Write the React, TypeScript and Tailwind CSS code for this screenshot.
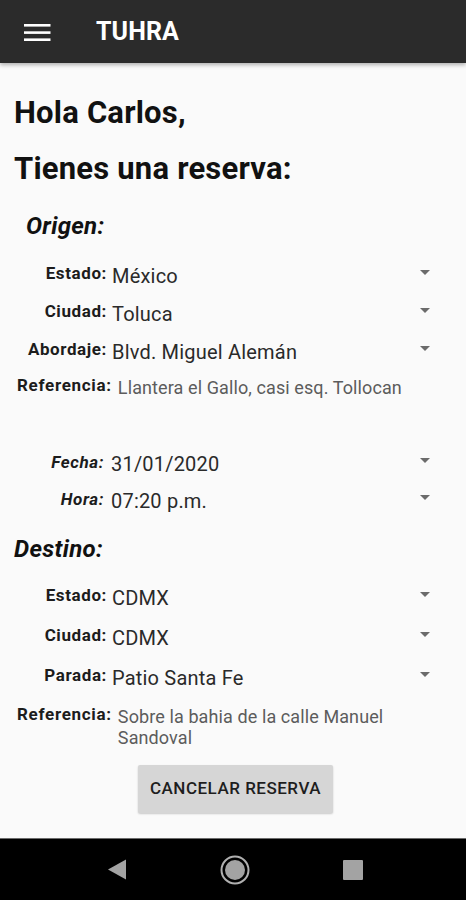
import React from "react";

const Arrow = () => (
  <svg width="10" height="5" viewBox="0 0 10 5" className="shrink-0">
    <path d="M0 0 L10 0 L5 5 Z" fill="#6b6b6b" />
  </svg>
);

type RowProps = {
  label: string;
  value: string;
  h: string;
  italic?: boolean;
};

const Row = ({ label, value, h, italic }: RowProps) => (
  <div className={`flex items-center pr-[36px] ${h}`}>
    <div
      className={`${italic ? "w-[104px] italic" : "w-[107px]"} text-right text-[17px] leading-[24px] font-bold tracking-[0.6px] text-[#1c1c1c] whitespace-nowrap`}
    >
      {label}
    </div>
    <div
      className={`${italic ? "ml-[7px]" : "ml-[5px]"} flex-1 pt-[5px] text-[20px] leading-[24px] tracking-[0.2px] text-[#2a2a2a]`}
    >
      {value}
    </div>
    <div className="-mt-[2px]">
      <Arrow />
    </div>
  </div>
);

const RefRow = ({ value, mt }: { value: string; mt: string }) => (
  <div className={`flex items-start ${mt}`}>
    <div className="pl-[17px] mt-[1px] text-[17px] leading-[20px] font-bold tracking-[0.7px] text-[#1c1c1c] whitespace-nowrap">
      Referencia:
    </div>
    <div className="ml-[6px] mt-[3px] pr-[48px] flex-1 text-[18px] leading-[21px] tracking-[0.1px] text-[#5c5c5c]">
      {value}
    </div>
  </div>
);

export default function App() {
  return (
    <div className="w-[466px] h-[900px] bg-[#fafafa] flex flex-col font-['Roboto',sans-serif] overflow-hidden">
      <header className="h-[63px] shrink-0 bg-[#2b2b2b] flex items-center shadow-[0_2px_4px_rgba(0,0,0,0.3)] relative z-10">
        <svg width="27" height="18" viewBox="0 0 27 18" className="ml-[24px]">
          <rect x="0" y="1" width="26.5" height="2.6" fill="#ffffff" />
          <rect x="0" y="8.3" width="26.5" height="2.6" fill="#ffffff" />
          <rect x="0" y="15.4" width="26.5" height="2.6" fill="#ffffff" />
        </svg>
        <div className="ml-[45px] text-[25px] font-bold text-white tracking-[0.1px]">TUHRA</div>
      </header>

      <main className="flex-1 flex flex-col">
        <div className="mt-[35px] pl-[14px] text-[31px] leading-[30px] font-bold tracking-[0.2px] text-[#111]">Hola Carlos,</div>
        <div className="mt-[26px] pl-[14px] text-[31px] leading-[30px] font-bold tracking-[0.2px] text-[#111]">Tienes una reserva:</div>

        <div className="mt-[30px] pl-[26px] text-[24px] leading-[24px] font-bold italic tracking-[0.3px] text-[#111]">Origen:</div>

        <div className="mt-[16px]">
          <Row label="Estado:" value="México" h="h-[38px]" />
          <Row label="Ciudad:" value="Toluca" h="h-[38px]" />
          <Row label="Abordaje:" value="Blvd. Miguel Alemán" h="h-[38px]" />
        </div>
        <RefRow value="Llantera el Gallo, casi esq. Tollocan" mt="mt-[6px]" />

        <div className="mt-[45px]">
          <Row label="Fecha:" value="31/01/2020" h="h-[37px]" italic />
          <Row label="Hora:" value="07:20 p.m." h="h-[37px]" italic />
        </div>

        <div className="mt-[20px] pl-[14px] text-[24px] leading-[24px] font-bold italic tracking-[0.3px] text-[#111]">Destino:</div>

        <div className="mt-[14px]">
          <Row label="Estado:" value="CDMX" h="h-[40px]" />
          <Row label="Ciudad:" value="CDMX" h="h-[40px]" />
          <Row label="Parada:" value="Patio Santa Fe" h="h-[40px]" />
        </div>
        <RefRow value="Sobre la bahia de la calle Manuel Sandoval" mt="mt-[8px]" />

        <div className="mt-[17px] ml-[138px] w-[195px] h-[48px] bg-[#d6d6d6] rounded-[2px] shadow-[0_1px_2px_rgba(0,0,0,0.2)] flex items-center justify-center text-[17px] font-medium tracking-[0.5px] text-[#1e1e1e]">
          CANCELAR RESERVA
        </div>
      </main>

      <nav className="h-[62px] shrink-0 bg-black border-t border-[#6b6b6b] flex items-center pl-[107px] gap-[93px]">
        <svg width="20" height="21" viewBox="0 0 20 21">
          <path d="M19 0.5 L19 20.5 L1 10.5 Z" fill="#a3a3a3" />
        </svg>
        <svg width="30" height="30" viewBox="0 0 30 30">
          <circle cx="15" cy="15" r="13.5" fill="none" stroke="#b0b0b0" strokeWidth="2" />
          <circle cx="15" cy="15" r="10" fill="#a3a3a3" />
        </svg>
        <svg width="20" height="20" viewBox="0 0 20 20">
          <rect x="0" y="0" width="20" height="20" rx="1" fill="#a3a3a3" />
        </svg>
      </nav>
    </div>
  );
}
